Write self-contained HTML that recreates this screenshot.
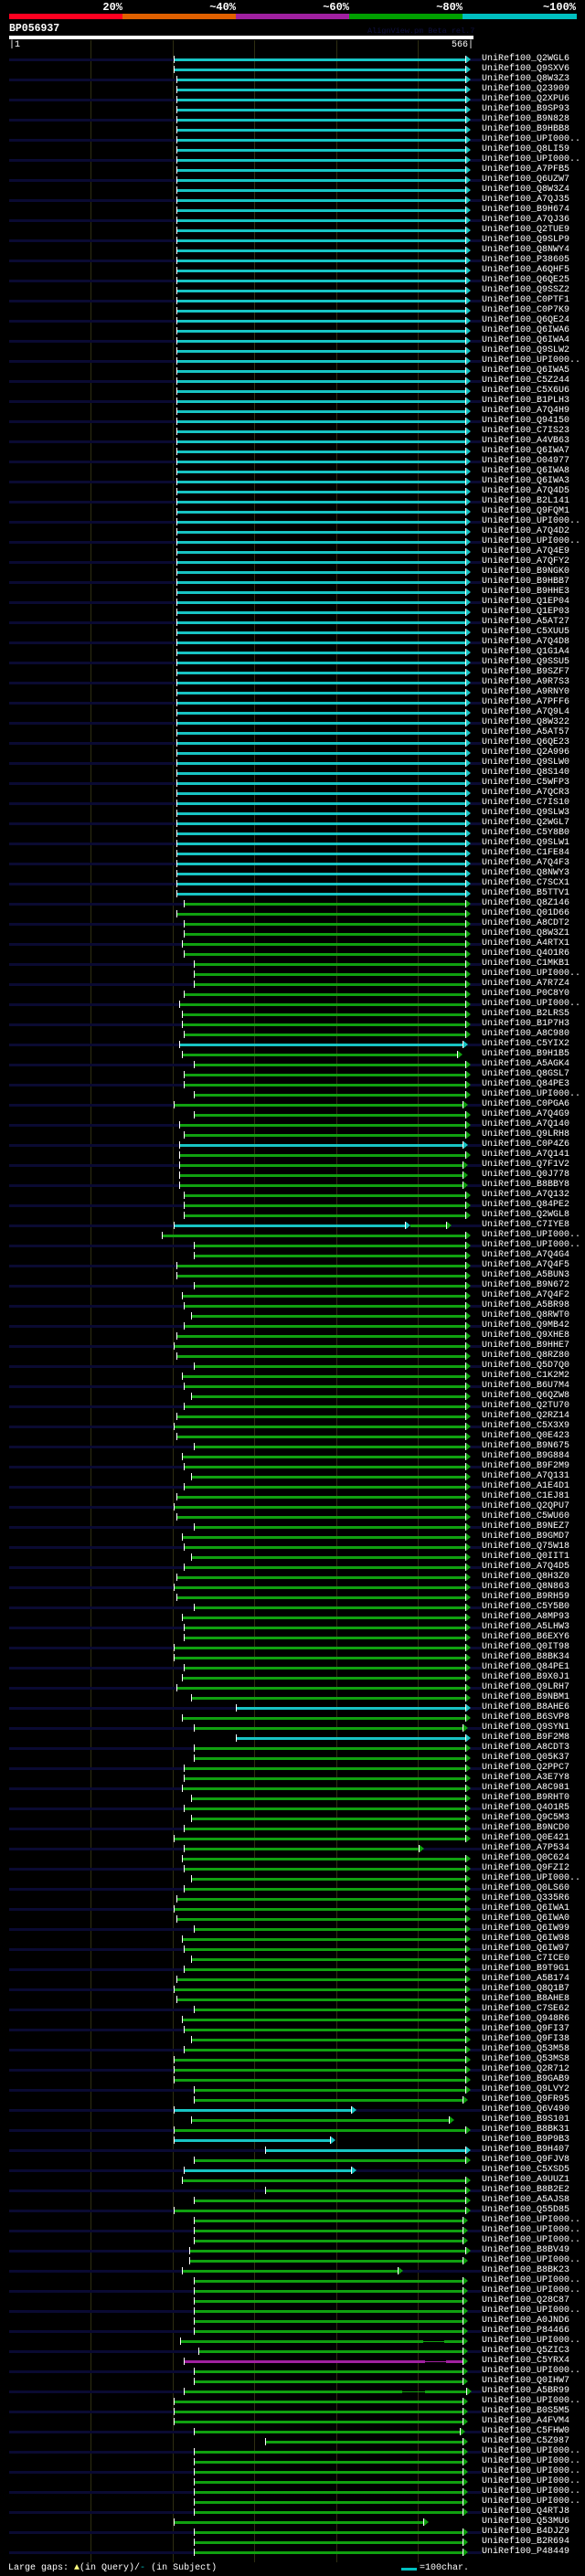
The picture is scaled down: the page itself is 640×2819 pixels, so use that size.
<!DOCTYPE html>
<html><head><meta charset="utf-8">
<style>
html,body{margin:0;padding:0;background:#000;}
body{width:640px;height:2819px;position:relative;overflow:hidden;font-family:"Liberation Mono",monospace;color:#fff;}
.a{position:absolute;}
.pct{position:absolute;top:2px;font-weight:bold;font-size:12px;line-height:12px;color:#fff;text-align:right;width:60px;}
.lbl{position:absolute;left:527px;font-size:10px;line-height:10px;color:#fff;white-space:nowrap;}
.g{position:absolute;top:44px;height:2760px;width:1px;background:#2e2e12;}
</style></head><body>
<div class="pct" style="left:74px">20%</div>
<div class="pct" style="left:198px">~40%</div>
<div class="pct" style="left:322px">~60%</div>
<div class="pct" style="left:446px">~80%</div>
<div class="pct" style="left:570px">~100%</div>
<div class="a" style="left:10px;top:15px;width:124px;height:6px;background:#ff0020"></div>
<div class="a" style="left:134px;top:15px;width:124px;height:6px;background:#e06000"></div>
<div class="a" style="left:258px;top:15px;width:124px;height:6px;background:#a020a0"></div>
<div class="a" style="left:382px;top:15px;width:124px;height:6px;background:#00a000"></div>
<div class="a" style="left:506px;top:15px;width:125px;height:6px;background:#00c0c0"></div>
<div class="a" style="left:10px;top:26px;font-weight:bold;font-size:11.5px;line-height:12px">BP056937</div>
<div class="a" style="left:402px;top:30px;font-size:8.5px;line-height:9px;color:#101040">AlignView.pm Beta rel.7</div>
<div class="a" style="left:10px;top:39px;width:508px;height:4px;background:#fff"></div>
<div class="a" style="left:10px;top:45px;font-size:10px;line-height:10px">|1</div>
<div class="a" style="left:494px;top:45px;font-size:10px;line-height:10px">566|</div>
<div class="g" style="left:99px"></div>
<div class="g" style="left:189px"></div>
<div class="g" style="left:278px"></div>
<div class="g" style="left:368px"></div>
<div class="g" style="left:457px"></div>
<div id="rows"></div>
<div class="a" style="left:9px;top:2806px;font-size:10px;line-height:10px">Large gaps: <span style="color:#ffff80">&#9650;</span>(in Query)/<span style="color:#00c0c0">-</span> (in Subject)</div>
<div class="a" style="left:439px;top:2810px;width:17px;height:3px;background:#00c0c0"></div>
<div class="a" style="left:459px;top:2806px;font-size:10px;line-height:10px">=100char.</div>
<script>
var U="UPI000..";
var head="Q2WGL6 Q9SXV6 Q8W3Z3 Q23909 Q2XPU6 B9SP93 B9N828 B9HBB8 U Q8LI59 U A7PFB5 Q6UZW7 Q8W3Z4 A7QJ35 B9H674 A7QJ36 Q2TUE9 Q9SLP9 Q8NWY4 P38605 A6QHF5 Q6QE25 Q9SSZ2 C0PTF1 C0P7K9 Q6QE24 Q6IWA6 Q6IWA4 Q9SLW2 U Q6IWA5 C5Z244 C5X6U6 B1PLH3 A7Q4H9 Q94150 C7IS23 A4VB63 Q6IWA7 O04977 Q6IWA8 Q6IWA3 A7Q4D5 B2L141 Q9FQM1 U A7Q4D2 U A7Q4E9 A7QFY2 B9NGK0 B9HBB7 B9HHE3 Q1EP04 Q1EP03 A5AT27 C5XUU5 A7Q4D8 Q1G1A4 Q9SSU5 B9SZF7 A9R7S3 A9RNY0 A7PFF6 A7Q9L4 Q8W322 A5AT57 Q6QE23 Q2A996 Q9SLW0 Q8S140 C5WFP3 A7QCR3 C7IS10 Q9SLW3 Q2WGL7 C5Y8B0 Q9SLW1 C1FE84 A7Q4F3 Q8NWY3 C7SCX1 B5TTV1 Q8Z146 Q01D66 A8CDT2 Q8W3Z1 A4RTX1 Q4O1R6 C1MKB1 U A7R7Z4 P0C8Y0 U B2LRS5 B1P7H3 A8C980 C5YIX2 B9H1B5 A5AGK4 Q8GSL7 Q84PE3 U C0PGA6 A7Q4G9 A7Q140 Q9LRH8 C0P4Z6 A7Q141 Q7F1V2 Q0J778 B8BBY8".split(" ");
while(head.length<113)head.push("U");head=head.slice(0,113);
var p2="A7Q132 Q84PE2 Q2WGL8 C7IYE8 U U A7Q4G4 A7Q4F5 A5BUN3 B9N672 A7Q4F2 A5BR98 Q8RWT0 Q9MB42 Q9XHE8 B9HHE7 Q8RZ80 Q5D7Q0 C1K2M2 B6U7M4 Q6QZW8 Q2TU70 Q2RZ14 C5X3X9 Q0E423 B9N675 B9G884 B9F2M9 A7Q131 A1E4D1 C1EJ81 Q2QPU7 C5WU60 B9NEZ7 B9GMD7 Q75W18 Q0IIT1 A7Q4D5 Q8H3Z0 Q8N863 B9RH59 C5Y5B0 A8MP93".split(" ");
while(p2.length<43)p2.push("U");p2=p2.slice(0,43);
var p3="A5LHW3 B6EXY6 Q0IT98 B8BK34 Q84PE1 B9X0J1 Q9LRH7 B9NBM1 B8AHE6 B6SVP8 Q9SYN1 B9F2M8 A8CDT3 Q05K37 Q2PPC7 A3E7Y8 A8C981 B9RHT0 Q4O1R5 Q9C5M3 B9NCD0 Q0E421 A7P534 Q0C624 Q9FZI2 U Q0LS60 Q335R6 Q6IWA1 Q6IWA0 Q6IW99 Q6IW98 Q6IW97 C7ICE0 B9T9G1 A5B174 Q8Q1B7 B8AHE8 C7SE62 Q948R6 Q9FI37 Q9FI38 Q53M58".split(" ");
var mid="Q53MS8 Q2R712 B9GAB9 Q9LVY2 Q9FR95 Q6V490 B9S101 B8BK31 B9P9B3 B9H407 Q9FJV8 C5XSD5 A9UUZ1 B8B2E2 A5AJS8 Q55D85 U U U B8BV49 U B8BK23 U".split(" ");
var tail="U Q28C87 U A0JND6 P84466 U Q5ZIC3 C5YRX4 U Q0IHW7 A5BR99 U B0S5M5 A4FVM4 C5FHW0 C5Z987 U U U U U U Q4RTJ8 Q53MU6 B4DJZ9 B2R694 P48449".split(" ");
var names=head.concat(p2,p3,mid,tail);
var sp={0:[190,509,"c"],1:[190,509,"c"],
84:[201,509,"g"],85:[193,509,"g"],86:[201,509,"g"],87:[201,509,"g"],88:[199,509,"g"],89:[201,509,"g"],90:[212,509,"g"],91:[212,509,"g"],92:[212,509,"g"],93:[201,509,"g"],94:[196,509,"g"],95:[199,509,"g"],96:[199,509,"g"],97:[201,509,"g"],98:[196,506,"c"],99:[199,500,"g"],100:[212,509,"g"],101:[201,509,"g"],102:[201,509,"g"],103:[212,509,"g"],104:[190,506,"g"],105:[212,509,"g"],106:[196,509,"g"],107:[201,509,"g"],108:[196,506,"c"],109:[196,509,"g"],110:[196,506,"g"],111:[196,506,"g"],112:[196,506,"g"],
113:[201,509,"g"],114:[201,509,"g"],115:[201,509,"g"],117:[177,509,"g"],118:[212,509,"g"],119:[212,509,"g"],120:[193,509,"g"],121:[193,509,"g"],
157:[201,509,"g"],158:[190,509,"g"],159:[190,509,"g"],160:[201,509,"g"],161:[199,509,"g"],162:[193,509,"g"],163:[209,509,"g"],164:[258,509,"c"],165:[199,509,"g"],166:[212,506,"g"],167:[258,509,"c"],168:[212,509,"g"],169:[212,509,"g"],170:[201,509,"g"],171:[201,509,"g"],172:[199,509,"g"],173:[209,509,"g"],174:[201,509,"g"],175:[209,509,"g"],176:[201,509,"g"],177:[190,509,"g"],178:[201,458,"g"],
199:[190,509,"g"],200:[190,509,"g"],201:[190,509,"g"],202:[212,509,"g"],203:[212,506,"g"],204:[190,384,"c"],205:[209,491,"g"],206:[190,509,"g"],207:[190,361,"c"],208:[290,509,"c"],209:[212,509,"g"],210:[201,384,"c"],211:[199,509,"g"],212:[290,509,"g"],213:[212,509,"g"],214:[190,509,"g"],215:[212,506,"g"],216:[212,506,"g"],217:[212,506,"g"],218:[207,509,"g"],219:[207,506,"g"],220:[199,435,"g"],221:[212,506,"g"],
222:[212,506,"g"],223:[212,506,"g"],224:[212,506,"g"],225:[212,506,"g"],226:[212,506,"g"],227:[197,506,"g"],228:[217,506,"g"],229:[201,506,"p"],230:[212,506,"g"],231:[212,506,"g"],232:[201,510,"g"],233:[190,506,"g"],234:[190,506,"g"],235:[190,506,"g"],236:[212,503,"g"],237:[290,506,"g"],
238:[212,506,"g"],239:[212,506,"g"],240:[212,506,"g"],241:[212,506,"g"],242:[212,506,"g"],243:[212,506,"g"],244:[212,506,"g"],245:[190,463,"g"],246:[212,506,"g"],247:[212,506,"g"],248:[212,506,"g"]};
var col={c:"#18c4c4",g:"#10a010",p:"#a020a0"};
var starts=[193,201,199,190,209,212,193,201];
var h="";
function seg(x,y,w,hh,c){return '<div class="a" style="left:'+x+'px;top:'+y+'px;width:'+w+'px;height:'+hh+'px;background:'+c+'"></div>';}
function tri(x,y,c){return '<div class="a" style="left:'+x+'px;top:'+y+'px;width:0;height:0;border-top:4px solid transparent;border-bottom:4px solid transparent;border-left:5px solid '+c+'"></div>';}
for(var i=0;i<names.length&&i<249;i++){
 var n=names[i]=="U"?U:names[i];
 var cy=65+i*11;
 var s=sp[i],st,en,c;
 if(s){st=s[0];en=s[1];c=s[2];}
 else{st=i<84?193:starts[(i*5+3)%8];en=509;c=i<84?"c":"g";}
 var nv=(i%2==0);
 if(i==116){st=190;en=488;}
 if(nv){h+=seg(10,cy-1,st-10,3,"#0a0a32");h+=seg(en+5,cy-1,527-en-5,3,"#0a0a32");}
 if(i==116){
  h+=seg(st,cy-1,253,3,col.c);h+=seg(443,cy-4,1,8,"#fff");h+=tri(444,cy-4,col.c);
  h+=seg(449,cy-1,en-449,3,col.g);c="g";
 } else if(c=="p"){
  h+=seg(st,cy-1,465-st,3,col.p);h+=seg(465,cy,23,1,col.p);h+=seg(488,cy-1,en-488,3,col.p);
 } else if(i==232){
  h+=seg(st,cy-1,440-st,3,col.g);h+=seg(440,cy,25,1,col.g);h+=seg(465,cy-1,en-465,3,col.g);
 } else if(i==227){
  h+=seg(st,cy-1,463-st,3,col.g);h+=seg(463,cy,23,1,col.g);h+=seg(486,cy-1,en-486,3,col.g);
 } else h+=seg(st,cy-1,en-st,3,col[c]);
 h+=seg(st,cy-4,1,8,"#fff");
 h+=seg(en,cy-4,1,8,"#fff");
 h+=tri(en+1,cy-4,col[c=="p"?"g":c]);
 h+='<div class="lbl" style="top:'+(cy-5)+'px">UniRef100_'+n+'</div>';
}
document.getElementById("rows").innerHTML=h;
</script>
</body></html>
